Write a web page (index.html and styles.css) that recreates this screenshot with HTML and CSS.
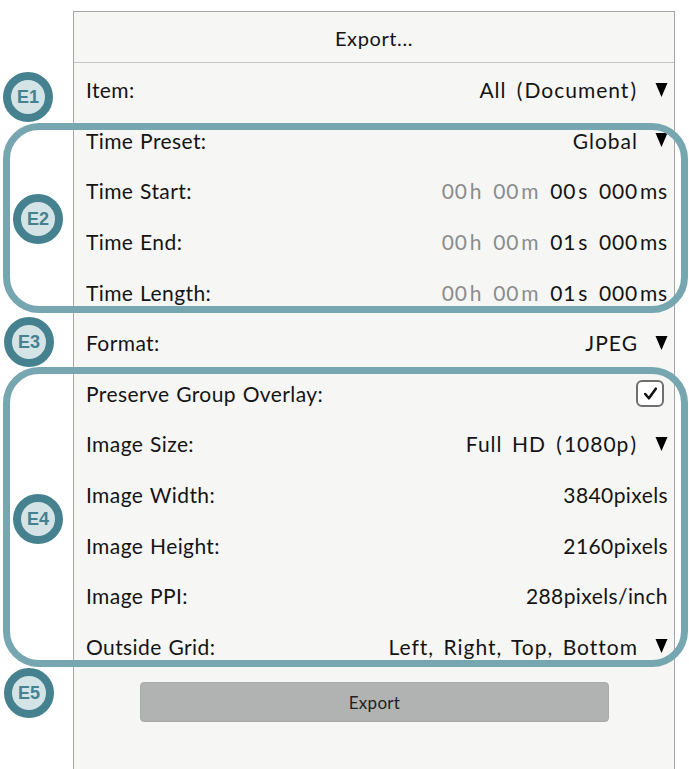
FILE: index.html
```html
<!DOCTYPE html>
<html>
<head>
<meta charset="utf-8">
<link rel="stylesheet" href="styles.css">
</head>
<body>
<div class="stage">
  <div class="panel">
    <div class="header">Export...</div>
    <div class="row"><span class="label">Item:</span><span class="value">All <span class="pr">(</span>Document<span class="pr">)</span><svg class="tri" viewBox="0 0 12 14"><polygon points="0,0 12,0 6,14"/></svg></span></div>
    <div class="row"><span class="label">Time Preset:</span><span class="value">Global<svg class="tri" viewBox="0 0 12 14"><polygon points="0,0 12,0 6,14"/></svg></span></div>
    <div class="row"><span class="label">Time Start:</span><span class="time"><span class="dim">00<i>h</i></span><span class="dim">00<i>m</i></span><span>00<i>s</i></span><span>000<i>ms</i></span></span></div>
    <div class="row"><span class="label">Time End:</span><span class="time"><span class="dim">00<i>h</i></span><span class="dim">00<i>m</i></span><span>01<i>s</i></span><span>000<i>ms</i></span></span></div>
    <div class="row"><span class="label">Time Length:</span><span class="time"><span class="dim">00<i>h</i></span><span class="dim">00<i>m</i></span><span>01<i>s</i></span><span>000<i>ms</i></span></span></div>
    <div class="row"><span class="label">Format:</span><span class="value">JPEG<svg class="tri" viewBox="0 0 12 14"><polygon points="0,0 12,0 6,14"/></svg></span></div>
    <div class="row"><span class="label">Preserve Group Overlay:</span><span class="check"><svg viewBox="0 0 16 16"><path d="M3 8.5 L6.5 12.5 L13 3.5" fill="none" stroke="#111" stroke-width="2.4" stroke-linecap="round" stroke-linejoin="round"/></svg></span></div>
    <div class="row"><span class="label">Image Size:</span><span class="value">Full HD <span class="pr">(</span>1080p<span class="pr">)</span><svg class="tri" viewBox="0 0 12 14"><polygon points="0,0 12,0 6,14"/></svg></span></div>
    <div class="row"><span class="label">Image Width:</span><span class="value plain">3840pixels</span></div>
    <div class="row"><span class="label">Image Height:</span><span class="value plain">2160pixels</span></div>
    <div class="row"><span class="label">Image PPI:</span><span class="value plain">288pixels/inch</span></div>
    <div class="row"><span class="label">Outside Grid:</span><span class="value">Left, Right, Top, Bottom<svg class="tri" viewBox="0 0 12 14"><polygon points="0,0 12,0 6,14"/></svg></span></div>
    <div class="actions"><button class="export-btn">Export</button></div>
  </div>

  <div class="bracket b-e2"></div>
  <div class="bracket b-e4"></div>

  <div class="badge e1">E1</div>
  <div class="badge e2">E2</div>
  <div class="badge e3">E3</div>
  <div class="badge e4">E4</div>
  <div class="badge e5">E5</div>
</div>
</body>
</html>
```

FILE: styles.css
```css
html, body {
  margin: 0;
  padding: 0;
  background: #ffffff;
}

.stage {
  position: relative;
  width: 689px;
  height: 769px;
  overflow: hidden;
  font-family: "Lato", "Noto Sans", sans-serif;
  color: #141414;
}

.panel {
  margin-left: 73px;
  margin-top: 11px;
  width: 600px;
  height: 760px;
  background: #f6f6f4;
  border: 1px solid #a9a4aa;
  border-bottom: none;
  display: flex;
  flex-direction: column;
}

.header {
  height: 51px;
  border-bottom: 1px solid #c4c4c4;
  display: flex;
  align-items: center;
  justify-content: center;
  font-size: 20px;
  letter-spacing: 0.6px;
  padding-top: 2px;
  box-sizing: border-box;
}

.row {
  height: 50.6px;
  display: flex;
  align-items: center;
  justify-content: space-between;
  padding: 3px 6px 0 12px;
  box-sizing: border-box;
  font-size: 21px;
  letter-spacing: 0.4px;
}

.row:first-of-type {
  margin-top: 2px;
}

.label {
  word-spacing: 1px;
}

.value {
  display: flex;
  align-items: center;
  white-space: pre;
  letter-spacing: 1px;
  word-spacing: 3px;
}

.value .pr {
  padding: 0 1px;
}

.value.plain {
  letter-spacing: 0.4px;
  word-spacing: 0;
}

.tri {
  width: 13px;
  height: 14px;
  margin-left: 17px;
  fill: #000;
}

.time {
  display: flex;
  gap: 11px;
  letter-spacing: 0.8px;
}

.time i {
  font-style: normal;
  margin-left: 2px;
}

.time .dim {
  color: #8c8c8c;
}

.check {
  width: 24px;
  height: 23px;
  border: 2px solid #6f6f6f;
  border-radius: 6px;
  background: #ffffff;
  display: flex;
  align-items: center;
  justify-content: center;
  margin-right: 4px;
}

.check svg {
  width: 17px;
  height: 17px;
}

.actions {
  display: flex;
  justify-content: flex-start;
  padding: 12px 0 0 66px;
}

.export-btn {
  width: 469px;
  height: 40px;
  border: 1px solid #a9acaa;
  border-radius: 4px;
  background: #b0b3b1;
  font-family: "Lato", "Noto Sans", sans-serif;
  font-size: 17px;
  letter-spacing: 0.3px;
  color: #222;
}

.bracket {
  position: absolute;
  border: 7px solid #76a6b0;
  border-radius: 36px;
  box-sizing: border-box;
}

.b-e2 {
  left: 3px;
  top: 123px;
  width: 685px;
  height: 190px;
}

.b-e4 {
  left: 3px;
  top: 367px;
  width: 685px;
  height: 300px;
}

.badge {
  position: absolute;
  width: 34px;
  height: 34px;
  border: 8px solid #45818e;
  border-radius: 50%;
  background: #d3e3e6;
  color: #45818e;
  font-family: "Liberation Sans", Arial, sans-serif;
  font-weight: bold;
  font-size: 18px;
  display: flex;
  align-items: center;
  justify-content: center;
}

.e1 { left: 3px; top: 72px; }
.e2 { left: 13px; top: 194px; }
.e3 { left: 4px; top: 317px; }
.e4 { left: 13px; top: 494px; }
.e5 { left: 4px; top: 668px; }
```
